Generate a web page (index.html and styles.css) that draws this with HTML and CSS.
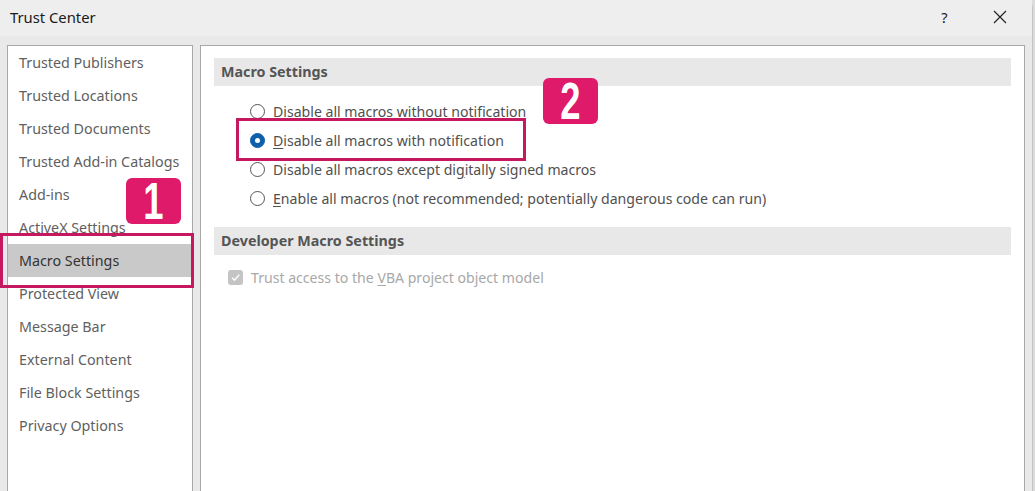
FILE: index.html
```html
<!DOCTYPE html>
<html lang="en">
<head>
    <meta charset="UTF-8">
    <meta name="viewport" content="width=device-width, initial-scale=1.0">
    <title>Trust Center</title>
    <link rel="stylesheet" href="styles.css">
</head>
<body>
    <div class="window">
        <div class="titlebar">
            <span class="title">Trust Center</span>
            <div class="title-buttons">
                <span class="help">?</span>
                <svg class="close" width="14" height="14" viewBox="0 0 14 14">
                    <path d="M1 1 L13 13 M13 1 L1 13" stroke="#222" stroke-width="1.2" fill="none"/>
                </svg>
            </div>
        </div>
        <div class="main">
            <ul class="nav">
                <li>Trusted Publishers</li>
                <li>Trusted Locations</li>
                <li>Trusted Documents</li>
                <li>Trusted Add-in Catalogs</li>
                <li>Add-ins</li>
                <li>ActiveX Settings</li>
                <li class="active">Macro Settings</li>
                <li>Protected View</li>
                <li>Message Bar</li>
                <li>External Content</li>
                <li>File Block Settings</li>
                <li>Privacy Options</li>
            </ul>
            <div class="content">
                <div class="section-title">Macro Settings</div>
                <div class="options">
                    <label class="option"><span class="radio"></span><span>Disable all macros <u>w</u>ithout notification</span></label>
                    <label class="option"><span class="radio checked"></span><span><u>D</u>isable all macros with notification</span></label>
                    <label class="option"><span class="radio"></span><span>Disable all macros except di<u>g</u>itally signed macros</span></label>
                    <label class="option"><span class="radio"></span><span><u>E</u>nable all macros (not recommended; potentially dangerous code can run)</span></label>
                </div>
                <div class="section-title">Developer Macro Settings</div>
                <label class="option disabled">
                    <span class="checkbox">
                        <svg width="11" height="11" viewBox="0 0 11 11"><path d="M2 5.8 L4.5 8.2 L9.2 2.8" stroke="#fff" stroke-width="1.4" fill="none"/></svg>
                    </span>
                    <span>Trust access to the <u>V</u>BA project object model</span>
                </label>
            </div>
        </div>

        <!-- callouts drawn on top of the dialog -->
        <div class="mark mark-nav"></div>
        <div class="mark mark-option"></div>
        <div class="badge badge-one"><span>1</span></div>
        <div class="badge badge-two"><span>2</span></div>
    </div>
</body>
</html>
```

FILE: styles.css
```css
html, body {
    margin: 0;
    height: 100%;
    overflow: hidden;
}
body {
    background-color: #dcdcdc;
    font-family: 'Noto Sans', 'Open Sans', sans-serif;
    font-size: 14.3px;
    color: #555;
}
.window {
    position: relative;
    width: 1032px;
    height: 100%;
    background-color: #e9e9e9;
    border-right: 1px solid #c4c4c4;
    border-radius: 8px 8px 0 0;
    display: flex;
    flex-direction: column;
}
.titlebar {
    height: 36px;
    flex-shrink: 0;
    display: flex;
    align-items: center;
    justify-content: space-between;
    padding: 0 0 2px 10px;
    box-sizing: border-box;
    background-color: #eeeeee;
}
.title {
    color: #1a1a1a;
    font-size: 14.8px;
}
.title-buttons {
    display: flex;
    align-items: center;
}
.help {
    color: #222;
    font-size: 14.5px;
    width: 57px;
    margin-right: 20px;
    text-align: center;
}
.close {
    margin-right: 25px;
}
.main {
    flex: 1;
    display: flex;
    gap: 7px;
    padding: 9px 7px 0 7px;
}
.nav {
    list-style: none;
    margin: 0;
    padding: 0;
    width: 184px;
    background-color: #fff;
    border: 1px solid #a8a8a8;
    border-bottom: none;
}
.nav li {
    height: 33px;
    line-height: 33px;
    padding-left: 11px;
    white-space: nowrap;
    color: #5f5f5f;
}
.nav li.active {
    background-color: #c9c9c9;
    color: #333;
}
.content {
    flex: 1;
    background-color: #fff;
    border: 1px solid #a8a8a8;
    border-bottom: none;
    padding: 12px 13px 0 13px;
}
.section-title {
    height: 28px;
    line-height: 28px;
    padding-left: 7px;
    background-color: #e8e8e8;
    font-weight: bold;
    color: #555;
}
.options {
    padding: 11px 0 14px 0;
}
.option {
    display: flex;
    align-items: center;
    height: 29px;
    padding-left: 36px;
    color: #505050;
    font-size: 14.1px;
    white-space: pre;
}
.option u {
    text-underline-offset: 2px;
}
.radio {
    width: 13px;
    height: 13px;
    border: 1px solid #555;
    border-radius: 50%;
    margin-right: 8px;
    box-sizing: content-box;
}
.radio.checked {
    border-color: #0f5fab;
    background-color: #0f5fab;
    position: relative;
}
.radio.checked::after {
    content: "";
    position: absolute;
    left: 4px;
    top: 4px;
    width: 5px;
    height: 5px;
    border-radius: 50%;
    background-color: #fff;
}
.option.disabled {
    padding-left: 14px;
    height: 44px;
    color: #a8a8a8;
}
.checkbox {
    width: 15px;
    height: 15px;
    border-radius: 3px;
    background-color: #c4c4c4;
    margin-right: 8px;
    display: flex;
    align-items: center;
    justify-content: center;
}
.mark {
    position: absolute;
    border: 3px solid #c6185f;
    box-sizing: border-box;
}
.mark-nav {
    left: 0;
    top: 233px;
    width: 194px;
    height: 55px;
}
.mark-option {
    left: 236px;
    top: 118px;
    width: 290px;
    height: 43px;
}
.badge {
    position: absolute;
    width: 55px;
    height: 46px;
    border-radius: 6px;
    background-color: #df1a6b;
    color: #fff;
    display: flex;
    align-items: center;
    justify-content: center;
    font-family: 'Liberation Sans', sans-serif;
    font-weight: bold;
    font-size: 52px;
}
.badge span {
    display: block;
    transform: scaleX(0.7);
    line-height: 1;
}
.badge-one {
    left: 126px;
    top: 178px;
}
.badge-two {
    left: 543px;
    top: 78px;
}
```
